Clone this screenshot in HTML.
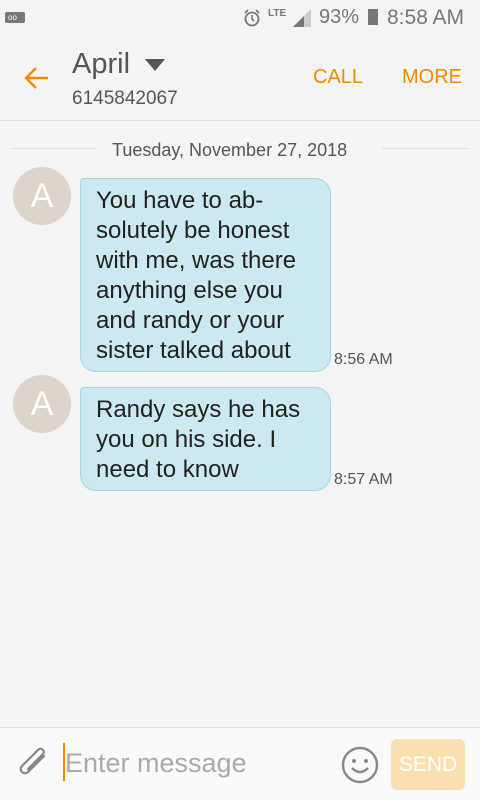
<!DOCTYPE html>
<html><head><style>
*{margin:0;padding:0;box-sizing:border-box}
body{width:480px;height:800px;background:#f4f4f4;font-family:"Liberation Sans",sans-serif;position:relative;overflow:hidden}
.a{position:absolute}
.av{position:absolute;left:13px;width:58px;height:58px;border-radius:50%;background:#dcd5c9;color:#fff;font-size:34px;text-align:center;line-height:58px}
.b{position:absolute;left:80px;width:251px;background:#cbe9ee;border:1px solid #a9d6de;border-radius:4px 16px 16px 16px;padding:7px 0 0 15px;font-size:24px;line-height:30px;color:#222}
.t{position:absolute;left:334px;font-size:16px;color:#555}
</style></head><body>
<div class="a" style="left:5px;top:12px;width:20px;height:11px;background:#777;border-radius:2px"></div>
<div class="a" style="left:8px;top:14px;font-size:8px;color:#fff;line-height:8px">oo</div>
<svg class="a" style="left:242px;top:8px" width="20" height="20" viewBox="0 0 20 20"><circle cx="10" cy="11" r="6.5" fill="none" stroke="#777" stroke-width="1.8"/><path d="M10 7v4l2 2M3 5l3-3M17 5l-3-3" stroke="#777" stroke-width="1.6" fill="none"/></svg>
<div class="a" style="left:268px;top:8px;font-size:10px;color:#777;font-weight:bold">LTE</div>
<svg class="a" style="left:292px;top:8px" width="20" height="20"><path d="M1 19L19 1V19Z" fill="#ccc"/><path d="M1 19L12 8V19Z" fill="#777"/></svg>
<div class="a" style="left:319px;top:6px;font-size:20px;color:#777">93%</div>
<div class="a" style="left:368px;top:9px;width:10px;height:16px;background:#777"></div>
<div class="a" style="left:387px;top:6px;font-size:21px;color:#777">8:58 AM</div>
<svg class="a" style="left:22px;top:64px" width="28" height="28" viewBox="0 0 28 28"><path d="M26 14H4M14 4L4 14l10 10" stroke="#f08a00" stroke-width="2.4" fill="none"/></svg>
<div class="a" style="left:72px;top:48px;font-size:29px;color:#555">April</div>
<svg class="a" style="left:145px;top:59px" width="22" height="14"><path d="M0 0h20L10 12z" fill="#555"/></svg>
<div class="a" style="left:72px;top:88px;font-size:19px;color:#555">6145842067</div>
<div class="a" style="left:313px;top:66px;font-size:20px;color:#f08a00">CALL</div>
<div class="a" style="left:402px;top:66px;font-size:20px;color:#f08a00">MORE</div>
<div class="a" style="left:0;top:120px;width:480px;height:1px;background:#ddd"></div>
<div class="a" style="left:12px;top:148px;width:85px;height:1px;background:#ddd"></div>
<div class="a" style="left:382px;top:148px;width:86px;height:1px;background:#ddd"></div>
<div class="a" style="left:112px;top:140px;font-size:18px;color:#555">Tuesday, November 27, 2018</div>
<div class="av" style="top:167px">A</div>
<div class="b" style="top:178px;height:194px">You have to ab-<br>solutely be honest<br>with me, was there<br>anything else you<br>and randy or your<br>sister talked about</div>
<div class="t" style="top:351px">8:56 AM</div>
<div class="av" style="top:375px">A</div>
<div class="b" style="top:387px;height:104px">Randy says he has<br>you on his side. I<br>need to know</div>
<div class="t" style="top:471px">8:57 AM</div>
<div class="a" style="left:0;top:727px;width:480px;height:73px;background:#fafafa;border-top:1px solid #ddd"></div>
<svg class="a" style="left:16px;top:746px" width="34" height="34" viewBox="0 0 34 34"><path d="M28 10L12 26a4 4 0 0 1-6-6L22 4a3 3 0 0 1 5 4L12 23" stroke="#888" stroke-width="2.2" fill="none" stroke-linecap="round"/></svg>
<div class="a" style="left:63px;top:743px;width:2px;height:38px;background:#f08a00"></div>
<div class="a" style="left:65px;top:748px;font-size:27px;color:#aaa">Enter message</div>
<svg class="a" style="left:340px;top:745px" width="40" height="40" viewBox="0 0 40 40"><circle cx="20" cy="20" r="17" fill="none" stroke="#888" stroke-width="2.4"/><circle cx="14" cy="16" r="2" fill="#888"/><circle cx="26" cy="16" r="2" fill="#888"/><path d="M12 23q8 8 16 0" stroke="#888" stroke-width="2.4" fill="none"/></svg>
<div class="a" style="left:391px;top:739px;width:74px;height:51px;background:#fae0b0;border-radius:6px;color:#fff;font-size:21px;text-align:center;line-height:51px">SEND</div>
</body></html>
